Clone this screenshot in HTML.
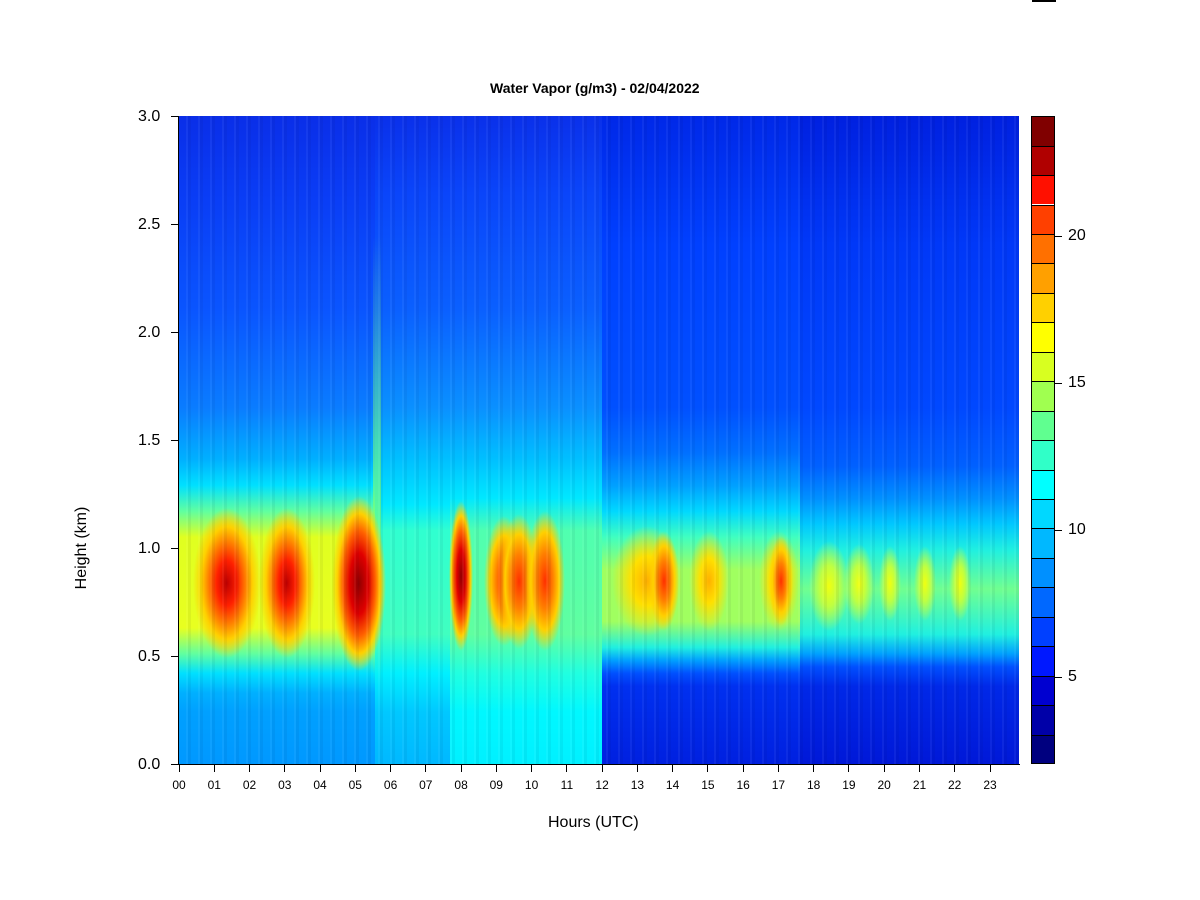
<!DOCTYPE html>
<html><head><meta charset="utf-8"><style>
body{margin:0;width:1200px;height:900px;background:#fff;position:relative;overflow:hidden;font-family:"Liberation Sans",Arial,sans-serif}
.a{position:absolute}
#plot{left:179px;top:116px;width:840px;height:648px;overflow:hidden}
.c{position:absolute;top:0;height:648px}
.L{background:linear-gradient(#0a2ee8 0%,#0a3cf5 12%,#0a55ff 30%,#0a7cff 45%,#00b0ff 53%,#00e0ff 57%,#60ffa0 61%,#e0ff20 65%,#e8ff20 79%,#60ffa0 83%,#00e0ff 86%,#00b0ff 89%,#00a0ff 92%,#0098ff 100%)}
.M{background:linear-gradient(#0a30ea 0%,#0a45fa 12%,#0a60ff 30%,#0a90ff 45%,#00c0ff 53%,#00e8ff 60%,#30ffd0 64%,#40ffc0 80%,#00f0ff 86%,#00c8ff 92%,#00b8ff 100%)}
.C{background:linear-gradient(#0a30ea 0%,#0a45fa 12%,#0a60ff 30%,#0a90ff 45%,#00c0ff 53%,#00e8ff 59%,#50ffb0 64%,#60ffa0 80%,#20ffe0 86%,#00f8ff 92%,#00f0ff 100%)}
.R{background:linear-gradient(#0028e8 0%,#0040ff 20%,#0050ff 45%,#0070ff 52%,#00a0ff 57%,#00d8ff 61%,#40ffc0 65%,#a0ff60 70%,#a0ff60 78%,#20f0e0 82%,#00a0ff 84%,#0050ff 86%,#0030f0 88%,#0020e0 100%)}
.R2{background:linear-gradient(#0020e0 0%,#0038f8 20%,#0048ff 45%,#0060ff 54%,#0090ff 59%,#00c8ff 63%,#20f0e0 67%,#70ff90 73%,#20f0e0 80%,#00a0ff 83%,#0050ff 85%,#0028e8 88%,#0018d8 100%)}
.b{position:absolute;border-radius:50%}
.red{background:radial-gradient(ellipse closest-side,#c00000 0%,#ff2000 30%,#ff8000 55%,#ffd000 75%,rgba(230,255,30,0) 100%)}
.org{background:radial-gradient(ellipse closest-side,#ff3000 0%,#ff8000 40%,#ffd000 70%,rgba(230,255,30,0) 100%)}
.yel{background:radial-gradient(ellipse closest-side,#ffb000 0%,#ffe000 45%,rgba(200,255,40,0) 100%)}
.grn{background:radial-gradient(ellipse closest-side,#f0ff10 0%,#c0ff40 45%,rgba(100,255,150,0) 100%)}
.dk{background:radial-gradient(ellipse closest-side,#900000 0%,#e00000 35%,#ff6000 60%,#ffd000 80%,rgba(230,255,30,0) 100%)}
.lab{font-size:16px;color:#000}
.tk{position:absolute;background:#000}
</style></head><body>
<div class="a" style="left:1032px;top:0;width:24px;height:2px;background:#000"></div>
<div class="a" style="left:490px;top:80px;font-size:14px;font-weight:bold">Water Vapor (g/m3) - 02/04/2022</div>
<div class="a" id="plot">
 <div class="c L" style="left:0;width:196px"></div>
 <div class="c M" style="left:196px;width:75px"></div>
 <div class="c C" style="left:271px;width:30px"></div>
 <div class="c C" style="left:301px;width:122px"></div>
 <div class="c R" style="left:423px;width:198px"></div>
 <div class="c R2" style="left:621px;width:219px"></div>
 <div class="a" style="left:194px;top:120px;width:8px;height:450px;background:linear-gradient(rgba(0,200,255,0),rgba(120,255,120,.7) 60%,rgba(0,200,255,0))"></div>
 <div class="b red" style="left:14px;top:392px;width:68px;height:150px"></div>
 <div class="b red" style="left:80px;top:392px;width:56px;height:150px"></div>
 <div class="b dk" style="left:153px;top:380px;width:54px;height:175px"></div>
 <div class="b dk" style="left:270px;top:385px;width:24px;height:150px"></div>
 <div class="b org" style="left:305px;top:400px;width:40px;height:130px"></div>
 <div class="b org" style="left:320px;top:398px;width:40px;height:135px"></div>
 <div class="b org" style="left:346px;top:395px;width:40px;height:140px"></div>
 <div class="b yel" style="left:433px;top:410px;width:70px;height:110px"></div>
 <div class="b org" style="left:470px;top:415px;width:30px;height:100px"></div>
 <div class="b yel" style="left:510px;top:415px;width:40px;height:100px"></div>
 <div class="b yel" style="left:580px;top:415px;width:40px;height:100px"></div>
 <div class="b org" style="left:590px;top:420px;width:24px;height:90px"></div>
 <div class="b grn" style="left:630px;top:425px;width:40px;height:90px"></div>
 <div class="b grn" style="left:665px;top:428px;width:30px;height:80px"></div>
 <div class="b grn" style="left:700px;top:430px;width:22px;height:75px"></div>
 <div class="b grn" style="left:735px;top:430px;width:22px;height:75px"></div>
 <div class="b grn" style="left:770px;top:430px;width:22px;height:75px"></div>
 <div class="a" style="left:0;top:0;width:840px;height:648px;background:repeating-linear-gradient(90deg,rgba(0,0,0,0) 0,rgba(0,0,0,0) 7px,rgba(255,255,255,.05) 7px,rgba(255,255,255,.05) 9px,rgba(0,0,40,.05) 9px,rgba(0,0,40,.05) 12px)"></div>
</div>
<div class="tk" style="left:178px;top:116px;width:1px;height:649px"></div>
<div class="tk" style="left:178px;top:764px;width:842px;height:1px"></div>
<div id="yt"></div>
<div class="a lab" style="left:138px;top:108px">3.0</div>
<div class="a lab" style="left:138px;top:216px">2.5</div>
<div class="a lab" style="left:138px;top:324px">2.0</div>
<div class="a lab" style="left:138px;top:432px">1.5</div>
<div class="a lab" style="left:138px;top:540px">1.0</div>
<div class="a lab" style="left:138px;top:648px">0.5</div>
<div class="a lab" style="left:138px;top:756px">0.0</div>
<div class="tk" style="left:171px;top:116px;width:7px;height:1px"></div>
<div class="tk" style="left:171px;top:224px;width:7px;height:1px"></div>
<div class="tk" style="left:171px;top:332px;width:7px;height:1px"></div>
<div class="tk" style="left:171px;top:440px;width:7px;height:1px"></div>
<div class="tk" style="left:171px;top:548px;width:7px;height:1px"></div>
<div class="tk" style="left:171px;top:656px;width:7px;height:1px"></div>
<div class="tk" style="left:171px;top:764px;width:7px;height:1px"></div>
<div class="a" style="left:82px;top:548px;transform:translate(-50%,-50%) rotate(-90deg);font-size:16px;white-space:nowrap">Height (km)</div>
<div class="a" style="left:548px;top:814px;font-size:16px">Hours (UTC)</div>
<div id="xt" style="position:absolute;left:0;top:0"></div>
<script>
var h='';for(var i=0;i<24;i++){var x=179+i*35.26;var s=(i<10?'0':'')+i;
h+='<div class="tk" style="left:'+(x-0.5).toFixed(1)+'px;top:764px;width:1px;height:8px"></div>';
h+='<div class="a" style="left:'+(x-10).toFixed(1)+'px;width:20px;text-align:center;top:778px;font-size:12px">'+s+'</div>';}
document.getElementById('xt').innerHTML=h;
var cols=['#00007f','#0000a8','#0000d0','#0000f0','#0018ff','#0040ff','#0068ff','#0090ff','#00b8ff','#00d8ff','#00ffff','#30ffc8','#60ff90','#a0ff50','#d8ff20','#ffff00','#ffd000','#ffa000','#ff7000','#ff4000','#ff1000','#e00000','#b00000','#800000'];
var sel=[0,1,2,4,5,6,7,8,9,10,11,12,13,14,15,16,17,18,19,20,22,23];
var c='';for(var k=0;k<22;k++){var y1=764-(k+1)*29.45;c+='<div class="a" style="left:1031px;top:'+y1.toFixed(1)+'px;width:24px;height:29.45px;background:'+cols[sel[k]]+';box-sizing:border-box;border:1px solid #000;border-bottom:none"></div>';}
c+='<div class="a" style="left:1031px;top:116px;width:24px;height:648px;border:1px solid #000;box-sizing:border-box"></div>';
[[20,236],[15,383],[10,530],[5,677]].forEach(function(p){c+='<div class="tk" style="left:1055px;top:'+p[1]+'px;width:7px;height:1px"></div><div class="a lab" style="left:1068px;top:'+(p[1]-9)+'px">'+p[0]+'</div>';});
document.getElementById('yt').innerHTML=c;
</script>
</body></html>
